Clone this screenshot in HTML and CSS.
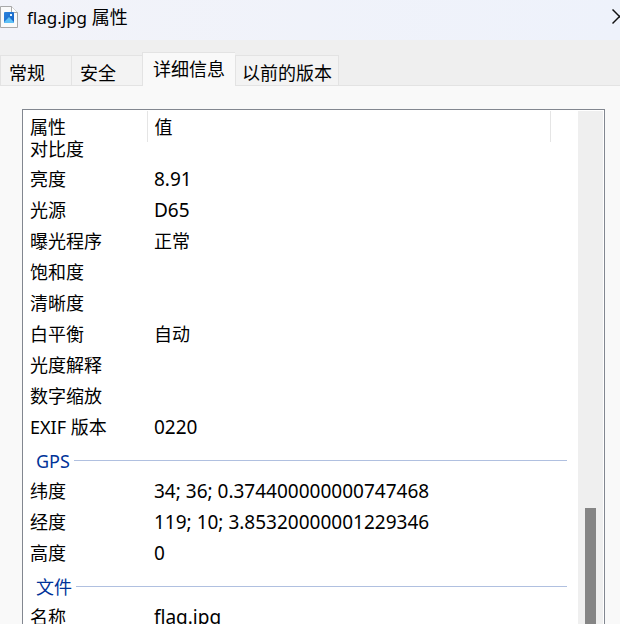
FILE: index.html
```html
<!DOCTYPE html>
<html lang="zh-CN">
<head>
<meta charset="UTF-8">
<meta name="viewport" content="width=device-width, initial-scale=1.0">
<title>flag.jpg 属性</title>
<link rel="stylesheet" href="styles.css">
</head>
<body>
  <div class="window">
    <header class="titlebar">
      <svg class="file-icon" width="19" height="24" viewBox="0 0 19 24" aria-hidden="true">
        <defs>
          <linearGradient id="sky" x1="0" y1="0" x2="1" y2="1">
            <stop offset="0" stop-color="#2b84dd"/>
            <stop offset="1" stop-color="#1560c4"/>
          </linearGradient>
        </defs>
        <path d="M0.500 1.500h11l6 6v15h-17z" fill="#fafafa" stroke="#a9a9a9"/>
        <path d="M11.500 1.500v6h6" fill="#fff" stroke="#a9a9a9"/>
        <rect x="4" y="7" width="10" height="11" rx="1" fill="url(#sky)"/>
        <path d="M4 17l5-5 5 5v0.500a1 1 0 0 1-1 0.500H5a1 1 0 0 1-1-1z" fill="#5fc0f5"/>
        <rect x="10" y="9" width="2" height="2" fill="#e8f6ff"/>
      </svg>
      <h1><span class="file-name">flag.jpg</span> 属性</h1>
      <button class="close" aria-label="关闭">
        <svg width="15" height="16" viewBox="0 0 15 16" aria-hidden="true">
          <path d="M0.500 0.500l14 14M14.500 0.500l-14 14" stroke="#111" stroke-width="1.500" fill="none"/>
        </svg>
      </button>
    </header>

    <div class="tabs" role="tablist">
      <button class="tab" role="tab">常规</button>
      <button class="tab" role="tab">安全</button>
      <button class="tab active" role="tab" aria-selected="true">详细信息</button>
      <button class="tab" role="tab">以前的版本</button>
    </div>

    <main class="page">
      <div class="list">
        <table class="details">
          <colgroup>
            <col class="col-name">
            <col>
            <col class="col-end">
          </colgroup>
          <thead>
            <tr><th>属性</th><th>值</th><td></td></tr>
          </thead>
          <tbody>
            <!-- partly scrolled under the header -->
            <tr class="cut"><td>对比度</td><td></td><td></td></tr>
            <tr><td>亮度</td><td class="num">8.91</td><td></td></tr>
            <tr><td>光源</td><td class="num">D65</td><td></td></tr>
            <tr><td>曝光程序</td><td>正常</td><td></td></tr>
            <tr><td>饱和度</td><td></td><td></td></tr>
            <tr><td>清晰度</td><td></td><td></td></tr>
            <tr><td>白平衡</td><td>自动</td><td></td></tr>
            <tr><td>光度解释</td><td></td><td></td></tr>
            <tr><td>数字缩放</td><td></td><td></td></tr>
            <tr><td>EXIF 版本</td><td class="num">0220</td><td></td></tr>
            <tr class="group"><th colspan="3"><div class="group-title">GPS</div></th></tr>
            <tr><td>纬度</td><td class="num">34; 36; 0.374400000000747468</td><td></td></tr>
            <tr><td>经度</td><td class="num">119; 10; 3.85320000001229346</td><td></td></tr>
            <tr><td>高度</td><td class="num">0</td><td></td></tr>
            <tr class="group"><th colspan="3"><div class="group-title">文件</div></th></tr>
            <tr><td>名称</td><td class="num">flag.jpg</td><td></td></tr>
          </tbody>
        </table>
        <div class="scrollbar"><div class="thumb"></div></div>
      </div>
    </main>
  </div>
</body>
</html>
```

FILE: styles.css
```css
* {
  box-sizing: border-box;
}

body {
  margin: 0;
  font-family: "Noto Sans", "Noto Sans CJK SC", sans-serif;
  font-size: 18px;
  font-weight: 400;
  line-height: 24px;
  color: #000;
  background-color: #f9f9f9;
}

button {
  font: inherit;
  color: inherit;
}

.window {
  display: flex;
  flex-direction: column;
  height: 100vh;
  overflow: hidden;
}

/* Title bar */
.titlebar {
  display: flex;
  flex-shrink: 0;
  align-items: center;
  height: 40px;
  padding-bottom: 6px;
  background: linear-gradient(to right, #f2f3f9, #eef2fb);
  overflow: hidden;
}

.titlebar h1 {
  margin: 0 0 0 8px;
  font-size: 18px;
  font-weight: inherit;
}

.file-name {
  font-size: 17px;
}

.close {
  display: flex;
  margin-left: auto;
  margin-right: -7px;
  padding: 0;
  border: 0;
  background: none;
}

/* Tabs */
.tabs {
  display: flex;
  flex-shrink: 0;
  align-items: flex-end;
  height: 46px;
  background-color: #efefef;
  box-shadow: inset 0 -1px #e3e3e3;
}

.tab {
  height: 31px;
  padding: 4px 26px 0 8px;
  border: 1px solid #e3e3e3;
  border-right: 0;
  background-color: #f3f3f3;
  white-space: nowrap;
}

.tab.active {
  height: 34px;
  padding: 0 10px 2px;
  border-bottom: 0;
  background-color: #f9f9f9;
}

.tab:last-child {
  padding: 4px 6px 0 6px;
  border-right: 1px solid #e3e3e3;
}

/* Property list */
.page {
  flex: 1;
  min-height: 0;
  padding: 23px 15px 0 22px;
}

.list {
  display: flex;
  align-items: flex-start;
  height: 100%;
  padding: 1px 1px 0 0;
  border: 1px solid #828790;
  border-bottom: 0;
  background-color: #fff;
  overflow: hidden;
}

.details {
  flex: 1;
  table-layout: fixed;
  width: 100%;
  border-collapse: collapse;
}

.col-name {
  width: 124px;
}

.col-end {
  width: 28px;
}

.details th,
.details td {
  height: 31px;
  padding: 0 0 3px 7px;
  font-weight: inherit;
  text-align: left;
  white-space: nowrap;
}

.details thead th {
  height: 30px;
  padding-bottom: 0;
  border-right: 1px solid #e5e5e5;
}

.details .cut td {
  height: 23px;
  padding-bottom: 9px;
  line-height: 14px;
}

.details .num {
  font-size: 19px;
}

.details .group th {
  height: 33px;
  padding: 0 11px 0 13px;
  color: #003399;
}

.group-title {
  display: flex;
  align-items: center;
  gap: 4px;
}

.group-title::after {
  content: "";
  flex: 1;
  height: 1px;
  background-color: #b0c0e0;
}

.scrollbar {
  flex-shrink: 0;
  width: 25px;
  height: 100%;
  padding: 397px 7px 0;
  background-color: #efefef;
}

.thumb {
  height: 100%;
  background-color: #858585;
}
```
